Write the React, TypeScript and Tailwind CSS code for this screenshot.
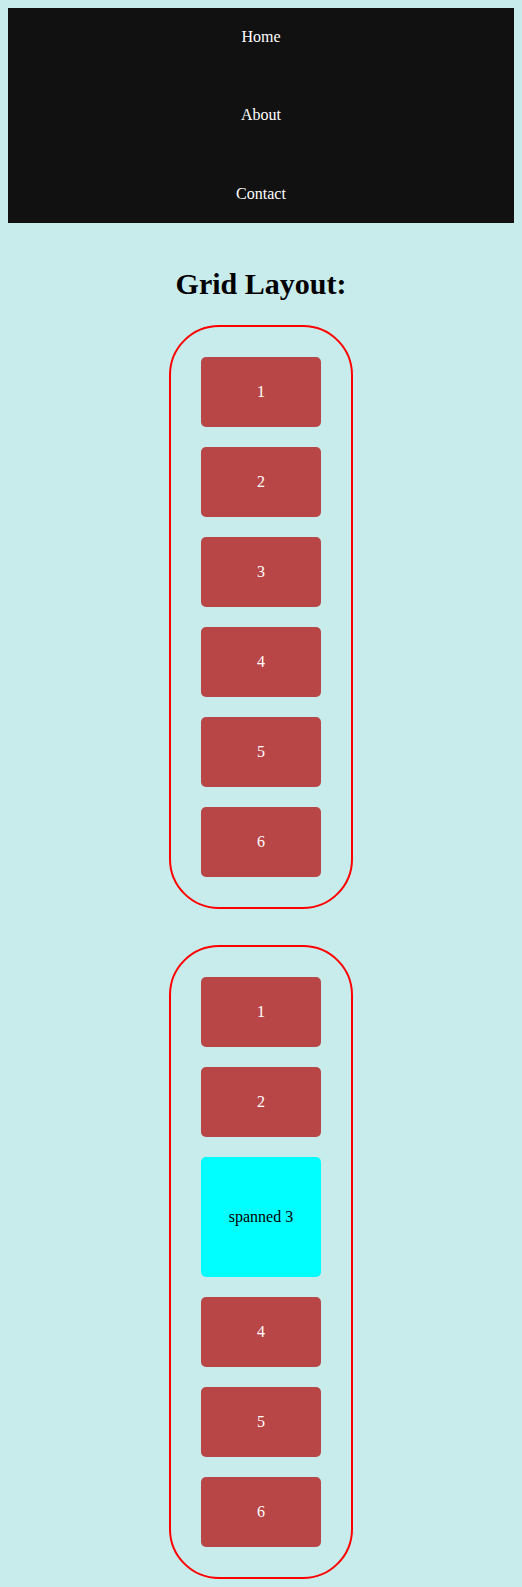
import React from 'react';

const items = ['1', '2', '3', '4', '5', '6'];

const Cell = ({ label, tall }: { label: string; tall?: boolean }) => (
  <div
    className={
      tall
        ? 'h-[120px] rounded-[5px] bg-[#00ffff] text-black flex items-center justify-center'
        : 'h-[70px] rounded-[5px] bg-[#b94646] text-white flex items-center justify-center'
    }
  >
    {label}
  </div>
);

const GridBox = ({ spanned }: { spanned?: boolean }) => (
  <div className="w-[184px] mx-auto border-2 border-[#ff0000] rounded-[50px] p-[30px] grid grid-cols-1 gap-[20px]">
    {items.map(i =>
      spanned && i === '3' ? <Cell key={i} label="spanned 3" tall /> : <Cell key={i} label={i} />
    )}
  </div>
);

export default function App() {
  return (
    <div className="min-h-[1587px] bg-[#c8ecec] p-[8px] text-[16px] font-['Liberation_Serif','Times_New_Roman',serif]">
      <nav className="bg-[#111111] text-white flex flex-col items-center gap-[20px]">
        {['Home', 'About', 'Contact'].map(n => (
          <a key={n} className="py-[20px] leading-[18.4px]">{n}</a>
        ))}
      </nav>
      <h1 className="text-center text-[30px] font-bold leading-[37px] mt-[42px] mb-[23px]">Grid Layout:</h1>
      <GridBox />
      <div className="h-[36px]" />
      <GridBox spanned />
    </div>
  );
}
